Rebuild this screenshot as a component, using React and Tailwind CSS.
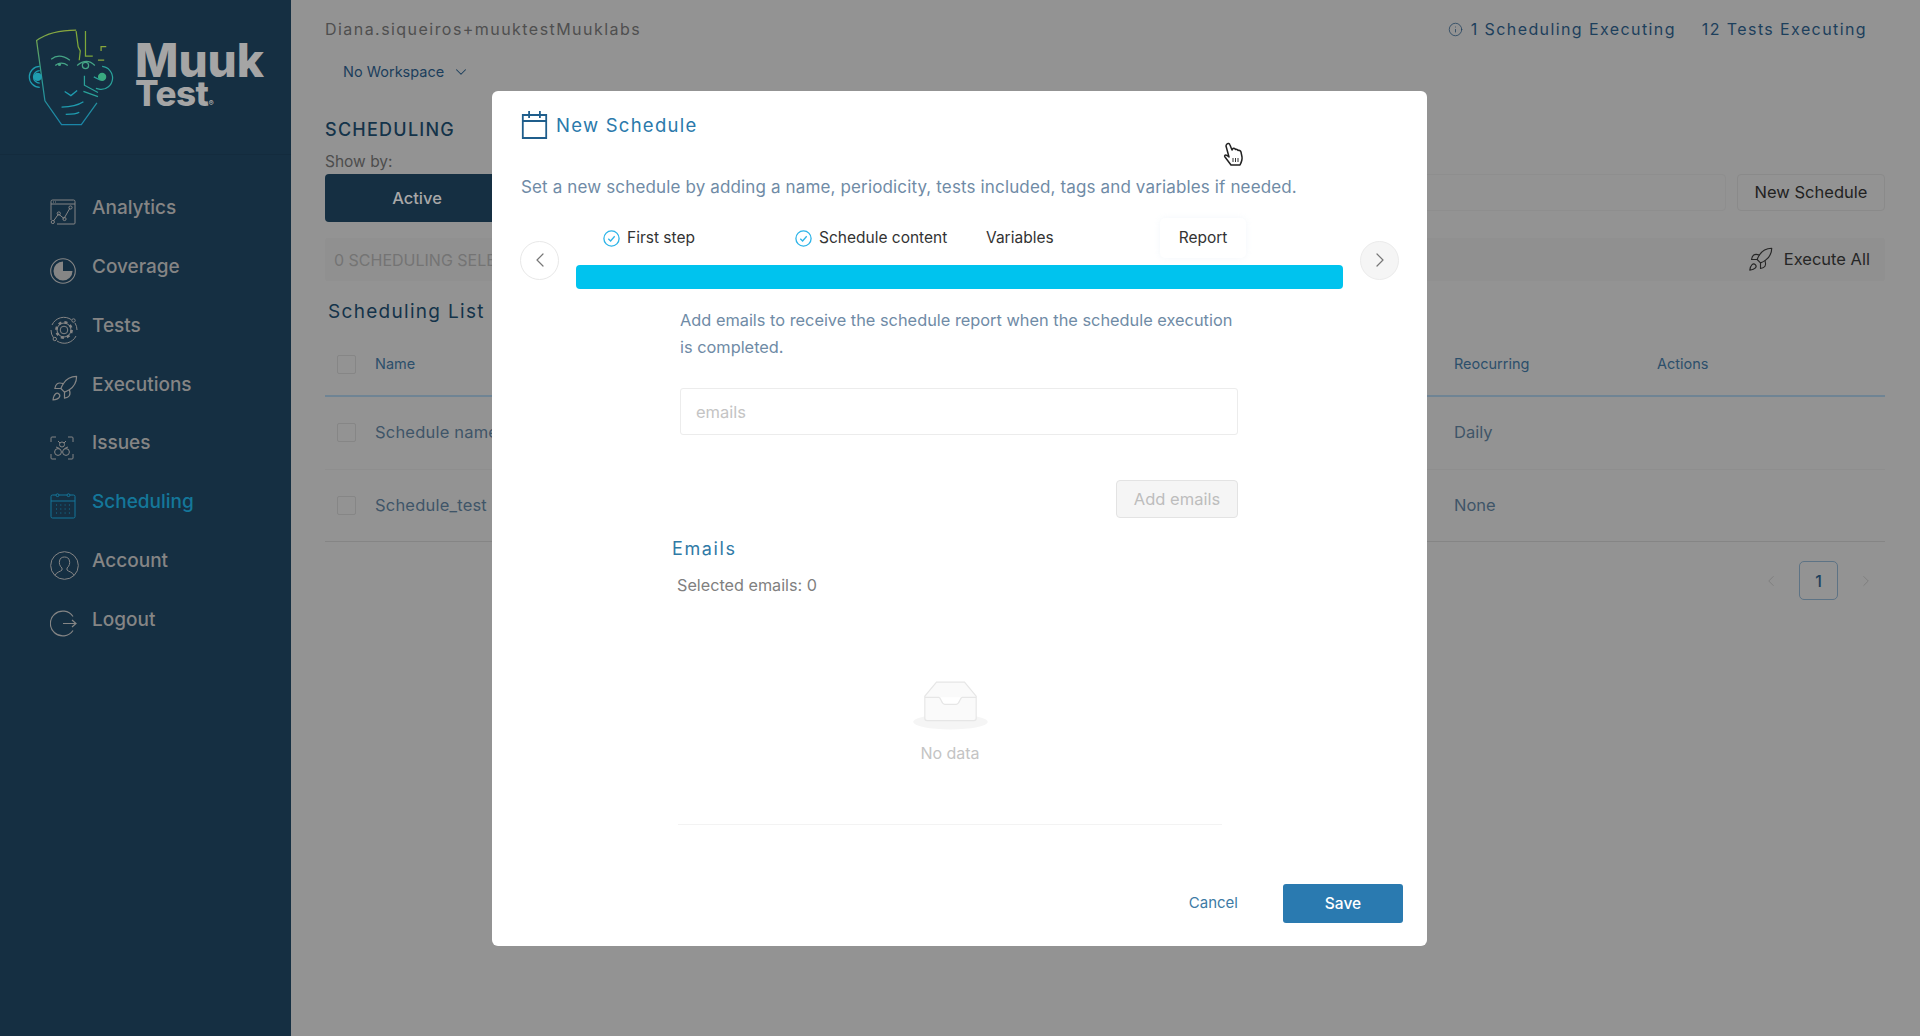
import { ChevronDown, ChevronLeft, ChevronRight, Info, Rocket } from "lucide-react";

const Logo = () => (
    <svg width="96" height="104" viewBox="0 0 92 100" fill="none" strokeWidth="1.2" className="shrink-0">
        <defs>
            <linearGradient id="face" x1="0" y1="0" x2="0" y2="1">
                <stop offset="0" stopColor="#8aa83c" />
                <stop offset="0.45" stopColor="#2f9c8f" />
                <stop offset="1" stopColor="#1a86a8" />
            </linearGradient>
        </defs>
        {/* outline */}
        <path d="M49 2C38 2 22 4 11 12L19 70L35 93H54L69 72" stroke="url(#face)" />
        {/* ears */}
        <path d="M14 37A10 10 0 0 0 14 57M14 41A6 6 0 0 0 14 53" stroke="#1f9db0" />
        <circle cx="12" cy="47" r="4" fill="#1f9db0" />
        <path d="M74 37A10.5 10.5 0 0 1 72 59L68 58" stroke="#2aa29a" />
        <circle cx="74" cy="47" r="4" fill="#3aaa80" />
        {/* circuit lines */}
        <path d="M49 3L51 18L53 22L52 31M58 3V27H65" stroke="#7ea83a" />
        <path d="M73 22V18H78M70 31H76" stroke="#8aa83c" />
        <path d="M57 46V55L70 62M56 61L70 66M66 47L72 50" stroke="#2aa29a" />
        {/* eyes and brows */}
        <path d="M25 30C30 26 36 26 43 31M29 36C32 33 37 33 41 36" stroke="#46a586" />
        <path d="M50 36C56 31 62 31 67 36" stroke="#46a586" />
        <circle cx="58" cy="36" r="3" stroke="#46a586" />
        <circle cx="33" cy="35" r="1.5" fill="#46a586" />
        {/* nose and mouth */}
        <path d="M38 61L44 65L50 60" stroke="#1f9db0" />
        <path d="M35 76C42 76 50 75 56 71M39 83C44 83 49 83 52 81" stroke="#1f9db0" />
    </svg>
);

const AnalyticsIcon = () => (
    <svg width="26" height="26" viewBox="0 0 26 26" fill="none" stroke="currentColor" strokeWidth="1">
        <path d="M1 9V2.5A1.5 1.5 0 0 1 2.5 1H23.5A1.5 1.5 0 0 1 25 2.5V24A1 1 0 0 1 24 25H7M1 5H25M1 9V21" />
        <path d="M3 3H7" strokeDasharray="1 1" />
        <path d="M3.5 22L8.5 15L14 19.5L20 9" />
        <circle cx="2.8" cy="23" r="1.6" />
        <circle cx="8.8" cy="14.5" r="1.6" />
        <circle cx="14.5" cy="20" r="1.6" />
        <circle cx="20.5" cy="8.5" r="1.6" />
    </svg>
);

const CoverageIcon = () => (
    <svg width="26" height="26" viewBox="0 0 26 26" fill="none" stroke="currentColor" strokeWidth="1.1">
        <circle cx="13" cy="13" r="12.3" />
        <path d="M13 3.5A9.5 9.5 0 1 0 22.5 13H13Z" fill="currentColor" stroke="none" />
    </svg>
);

const TestsIcon = () => (
    <svg width="28" height="28" viewBox="0 0 28 28" fill="none" stroke="currentColor" strokeWidth="1">
        <path d="M21.5 3.8A13 13 0 0 0 2 9M1 14A13 13 0 0 0 3.5 21.8M7 25A13 13 0 0 0 26 20M27 14A13 13 0 0 0 25 7" />
        <circle cx="23.5" cy="4.5" r="1.7" />
        <circle cx="4.8" cy="23" r="1.7" />
        <circle cx="14" cy="14" r="7.6" strokeWidth="2.6" strokeDasharray="3 3" />
        <circle cx="14" cy="14" r="7" />
        <circle cx="14" cy="14" r="3.8" />
    </svg>
);

const IssuesIcon = () => (
    <svg width="24" height="24" viewBox="0 0 24 24" fill="none" stroke="currentColor" strokeWidth="1">
        <path d="M1 6V2A1 1 0 0 1 2 1H6M18 1H22A1 1 0 0 1 23 2V6M23 18V22A1 1 0 0 1 22 23H18M6 23H2A1 1 0 0 1 1 22V18" />
        <circle cx="12" cy="8.5" r="2.5" />
        <circle cx="8" cy="16" r="3.4" />
        <circle cx="16" cy="16" r="3.4" />
        <path d="M8 5L10 7M16 5L14 7M6 11L9.5 12.5M18 11L14.5 12.5" />
    </svg>
);

const CalendarDotsIcon = () => (
    <svg width="26" height="26" viewBox="0 0 26 26" fill="none" stroke="currentColor" strokeWidth="1">
        <path d="M6 2H2.5A1.5 1.5 0 0 0 1 3.5V23.5A1.5 1.5 0 0 0 2.5 25H23.5A1.5 1.5 0 0 0 25 23.5V3.5A1.5 1.5 0 0 0 23.5 2H20M9 2H17M1 8H25" />
        <circle cx="7.5" cy="2.2" r="1.4" />
        <circle cx="18.5" cy="2.2" r="1.4" />
        <path d="M6 12H20M6 16H20M6 20H20" strokeDasharray="1 3.3" />
    </svg>
);

const AccountIcon = () => (
    <svg width="29" height="29" viewBox="0 0 29 29" fill="none" stroke="currentColor" strokeWidth="1">
        <circle cx="14.5" cy="14.5" r="13.8" />
        <path d="M5 24.5C6 21 11 20.5 12 19V17C9.5 15 9 12 9.5 10C10 7 12 6 14.5 6C17 6 19 7 19.5 10C20 12 19.5 15 17 17V19C18 20.5 23 21 24 24.5" />
    </svg>
);

const LogoutIcon = () => (
    <svg width="27" height="27" viewBox="0 0 27 27" fill="none" stroke="currentColor" strokeWidth="1.2">
        <path d="M23 6.5A12.4 12.4 0 1 0 23 20.5" />
        <path d="M13 13.5H26M22 10L26 13.5L22 17" />
    </svg>
);

const navItems = [
    { label: "Analytics", icon: <AnalyticsIcon /> },
    { label: "Coverage", icon: <CoverageIcon /> },
    { label: "Tests", icon: <TestsIcon /> },
    { label: "Executions", icon: <Rocket size={29} strokeWidth={1} /> },
    { label: "Issues", icon: <IssuesIcon /> },
    { label: "Scheduling", icon: <CalendarDotsIcon />, active: true },
    { label: "Account", icon: <AccountIcon /> },
    { label: "Logout", icon: <LogoutIcon /> },
];

const rows = [
    { name: "Schedule name", recurring: "Daily" },
    { name: "Schedule_test", recurring: "None" },
];

const CheckCircle = () => (
    <svg width="17" height="17" viewBox="0 0 17 17" fill="none" stroke="#2db4e8" strokeWidth="1.3">
        <circle cx="8.5" cy="8.5" r="7.6" />
        <path d="M5.3 8.8L7.6 11L11.7 6.3" />
    </svg>
);

const EmptyBox = () => (
    <svg width="75" height="49" viewBox="0 0 64 42" fill="none">
        <ellipse cx="32" cy="35" rx="32" ry="6.500" fill="#f5f5f5" />
        <path d="M10 13L20 1H44L54 13V32A2 2 0 0 1 52 34H12A2 2 0 0 1 10 32Z" fill="#fafafa" stroke="#e6e6e6" strokeWidth="1" />
        <path d="M10 14H22C24 14 24 20 27 20H37C40 20 40 14 42 14H54" fill="#fff" stroke="#e6e6e6" strokeWidth="1" />
    </svg>
);

const HandCursor = () => (
    <svg width="22" height="25" viewBox="0 0 22 25" className="absolute left-[730px] top-[51px]">
        <path d="M5 2C6 1 7.500 1.500 8 3L10 8L11 6.500C12 6 13 6.500 13.500 7.500C14.500 7 15.500 7.500 16 8.500C17 8 18.500 8.500 19 10L20 15C20.500 18 19 21 18 23H9L3 15C2 13.500 3 12.500 5 13.500L7 15L4 4C4 3 4.500 2.500 5 2Z" fill="#fff" stroke="#222" strokeWidth="1.5" strokeLinejoin="round" />
        <path d="M11 16V20M13.500 16V20M16 16V20" stroke="#333" strokeWidth="1" />
    </svg>
);

const steps = [
    { label: "First step", done: true, className: "w-[219px] pl-[27px]" },
    { label: "Schedule content", done: true, className: "w-[191px]" },
    { label: "Variables", className: "w-[186px]" },
];

const NewScheduleModal = () => (
    <div className="absolute left-[492px] top-[91px] w-[935px] h-[855px] bg-white rounded-[6px] flex flex-col text-[#333]">
        <HandCursor />
        <div className="flex items-center gap-[8px] pl-[29px] pt-[20px]">
            <svg width="27" height="28" viewBox="0 0 30 28" fill="none" stroke="#1f5e8c" strokeWidth="2" preserveAspectRatio="none">
                <rect x="2" y="4" width="26" height="23" />
                <path d="M2 10H28M9 0V7M21 0V7" />
            </svg>
            <h2 className="text-[18.500px] leading-[28px] tracking-[1.25px] text-[#2a79ab]">New Schedule</h2>
        </div>
        <p className="ml-[29px] mt-[35px] text-[17px] leading-[26px] text-[#6f8ba6] tracking-[0.14px]">
            Set a new schedule by adding a name, periodicity, tests included, tags and variables if needed.
        </p>

        {/* stepper */}
        <div className="flex items-center ml-[28px] mt-[18px] w-[879px] justify-between">
            <button className="w-[39px] h-[39px] mt-[13px] rounded-full border border-[#e8e8e8] flex items-center justify-center text-[#777]">
                <ChevronLeft size={24} strokeWidth={1.2} />
            </button>
            <div className="w-[767px]">
                <div className="flex items-center h-[40px] text-[15.500px]">
                    {steps.map((step) => (
                        <div key={step.label} className={`flex items-center gap-[7px] ${step.className}`}>
                            {step.done && <CheckCircle />}
                            <span>{step.label}</span>
                        </div>
                    ))}
                    <div className="w-[86px] h-[40px] ml-[-12px] rounded-[5px] shadow-[0_0_6px_rgba(225,235,245,0.4)] flex items-center justify-center">Report</div>
                </div>
                <div className="h-[24px] mt-[7px] rounded-[4px] bg-[#00c3ee]"></div>
            </div>
            <button className="w-[39px] h-[39px] mt-[13px] rounded-full border border-[#ebebeb] bg-[#f5f5f5] flex items-center justify-center text-[#777]">
                <ChevronRight size={24} strokeWidth={1.2} />
            </button>
        </div>

        {/* report step */}
        <div className="ml-[188px] w-[558px] mt-[18px]">
            <p className="text-[16.350px] leading-[27px] text-[#6f8ba6]">
                Add emails to receive the schedule report when the schedule execution is completed.
            </p>
            <input
                placeholder="emails"
                className="mt-[27px] w-full h-[47px] px-[15px] rounded-[3px] border border-[#ececec] text-[16.500px] placeholder:text-[#c4c4c4] outline-none"
            />
            <div className="flex justify-end mt-[45px]">
                <button className="w-[122px] h-[38px] rounded-[4px] border border-[#e3e3e3] bg-[#f5f5f5] text-[16.500px] text-[#bdbdbd]">Add emails</button>
            </div>
        </div>
        <h3 className="ml-[180px] mt-[18px] text-[18px] leading-[26px] tracking-[1.6px] text-[#2f7aa6]">Emails</h3>
        <div className="ml-[185px] mt-[11px] text-[16.200px] leading-[24px] text-[#808080]">Selected emails: 0</div>

        <div className="ml-[186px] w-[544px] mt-[84px] flex flex-col items-center border-b border-[#f3f3f3] h-[144px]">
            <EmptyBox />
            <span className="mt-[12px] text-[16px] leading-[22px] text-[#c4c4c4]">No data</span>
        </div>

        <div className="flex items-center justify-end mt-[59px] pr-[24px]">
            <button className="mr-[45px] text-[15px] text-[#3d7ba5]">Cancel</button>
            <button className="w-[120px] h-[39px] rounded-[3px] bg-[#2a7ab0] text-white text-[15.500px] font-medium">Save</button>
        </div>
    </div>
);

export default function App() {
    return (
        <div className="relative flex h-[1036px] overflow-hidden bg-[#939393] font-['Inter',sans-serif]">
            {/* sidebar */}
            <aside className="w-[291px] shrink-0 bg-[#152f42]">
                <div className="h-[155px] border-b border-[#132b3d] flex items-start pl-[25px] pt-[28px] gap-[14px]">
                    <Logo />
                    <div className="pt-[13px] text-[#a5a5a5] font-extrabold">
                        <div className="text-[46px] leading-[38px]">Muuk</div>
                        <div className="text-[35px] leading-[28px] tracking-[-0.5px]">Test<span className="text-[8px]">®</span></div>
                    </div>
                </div>
                <nav className="pt-[26.500px] pl-[50px]">
                    {navItems.map((item) => (
                        <div
                            key={item.label}
                            className={`flex items-center h-[58.800px] ${item.active ? "text-[#14779a]" : "text-[#858585]"}`}
                        >
                            <span className="w-[42px] flex items-center pt-[3px]">{item.icon}</span>
                            <span className="text-[19px] font-medium pb-[5px]">{item.label}</span>
                        </div>
                    ))}
                </nav>
            </aside>

            {/* page behind the modal */}
            <main className="flex-1 pl-[34px] pr-[35px] min-w-0">
                <header className="flex items-center justify-between h-[58px]">
                    <span className="text-[16px] tracking-[1.45px] text-[#4f4f4f]">Diana.siqueiros+muuktestMuuklabs</span>
                    <div className="flex items-center pr-[18px] text-[16px] tracking-[1.4px] text-[#1d3f5c]">
                        <Info size={15} strokeWidth={1.2} className="mr-[8px]" />
                        <span>1 Scheduling Executing</span>
                        <span className="ml-[26px]">12 Tests Executing</span>
                    </div>
                </header>
                <div className="flex items-center gap-[8px] pl-[18px] h-[28px] text-[14.500px] text-[#1b3e5c]">
                    No Workspace
                    <ChevronDown size={18} strokeWidth={1.4} />
                </div>
                <h1 className="mt-[31px] text-[18px] leading-[26px] tracking-[1.25px] font-medium text-[#14334a]">SCHEDULING</h1>
                <div className="mt-[9px] text-[15.500px] leading-[20px] text-[#4d4d4d]">Show by:</div>
                <div className="flex items-start gap-[11px] mt-[2px]">
                    <div className="w-[184px] h-[48px] rounded-[4px] bg-[#152f42] text-[#a8a8a8] text-[16.500px] font-medium flex items-center justify-center">Active</div>
                    <div className="flex-1 h-[37px] rounded-[4px] border border-[#8e8e8e] text-[#7a7a7a] text-[16px] flex items-center justify-end pr-[8px]"></div>
                    <button className="w-[148px] h-[37px] rounded-[4px] border border-[#8a8a8a] text-[#222] text-[16.500px]">New Schedule</button>
                </div>
                <div className="mt-[16px] h-[43px] rounded-[3px] bg-[#909090] flex items-center justify-between pl-[9px] pr-[15px]">
                    <span className="text-[16px] text-[#747474]">0 SCHEDULING SELECTED</span>
                    <span className="flex items-center gap-[10px] text-[16.500px] text-[#262626]">
                        <Rocket size={27} strokeWidth={1} />
                        Execute All
                    </span>
                </div>
                <h2 className="mt-[17px] ml-[3px] text-[19px] leading-[28px] tracking-[1.3px] text-[#14334a]">Scheduling List</h2>

                {/* table */}
                <div className="mt-[7px] flex items-center h-[64px] border-b-2 border-[#6f8494] text-[14.500px] text-[#2c4f6b]">
                    <span className="w-[19px] h-[19px] ml-[12px] mr-[19px] rounded-[2px] border border-[#868686]"></span>
                    <span className="flex-1">Name</span>
                    <span className="w-[203px]">Reocurring</span>
                    <span className="w-[228px]">Actions</span>
                </div>
                {rows.map((row, i) => (
                    <div key={row.name} className={`flex items-center h-[72.500px] text-[16.500px] text-[#3f5568] border-b ${i === 1 ? "border-[#858585]" : "border-[#8e8e8e]"}`}>
                        <span className="w-[19px] h-[19px] ml-[12px] mr-[19px] rounded-[2px] border border-[#868686]"></span>
                        <span className="flex-1 tracking-[0.2px]">{row.name}</span>
                        <span className="w-[431px]">{row.recurring}</span>
                    </div>
                ))}
                <div className="flex items-center justify-end mt-[19px] pr-[10px] text-[#7d7d7d]">
                    <ChevronLeft size={18} strokeWidth={1.2} />
                    <span className="w-[39px] h-[39px] mx-[19px] rounded-[5px] border border-[#5d7385] text-[#1d3f5c] text-[16px] font-medium flex items-center justify-center">1</span>
                    <ChevronRight size={18} strokeWidth={1.2} />
                </div>
            </main>

            <NewScheduleModal />
        </div>
    );
}
